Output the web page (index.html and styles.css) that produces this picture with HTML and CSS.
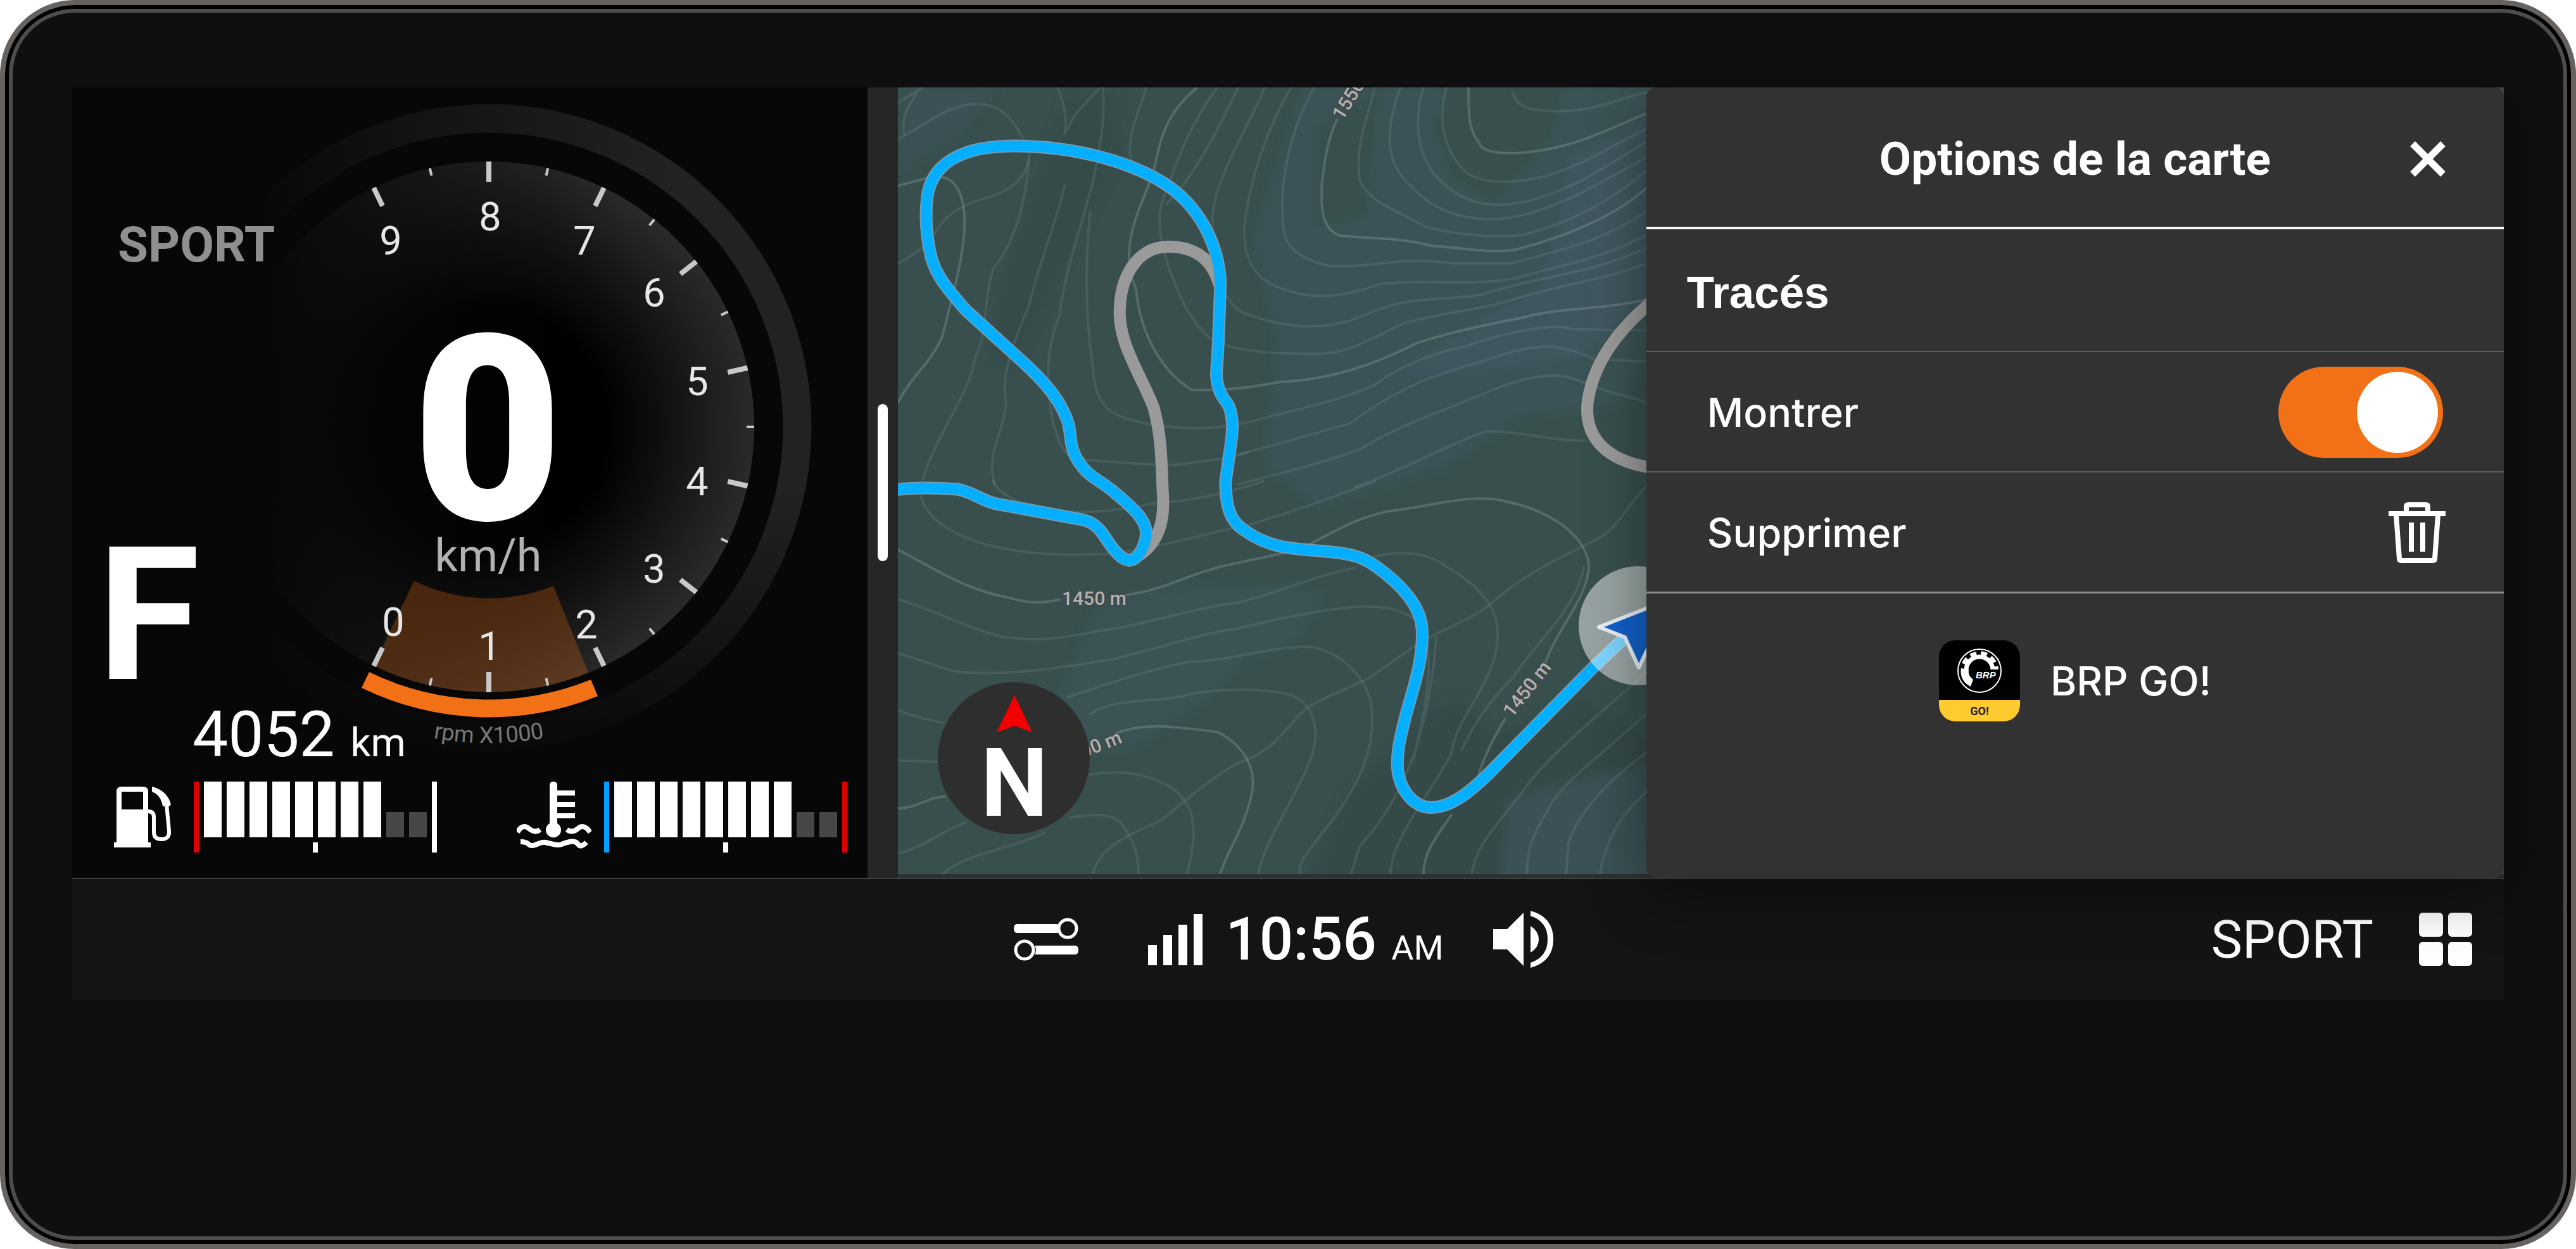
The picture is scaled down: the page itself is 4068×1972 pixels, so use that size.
FILE: index.html
```html
<!DOCTYPE html>
<html lang="fr">
<head>
<meta charset="utf-8">
<meta name="viewport" content="width=device-width, initial-scale=1">
<title>Options de la carte</title>
<link rel="stylesheet" href="styles.css">
</head>
<body>
<div class="device">
  <div class="screen">
    <main class="panes">
      <section class="cluster" aria-label="Instruments">
        <svg class="gauge" viewBox="114 138 1256 1062" role="img" aria-label="Compte-tours">
          <defs>
            <linearGradient id="ring" x1="0" x2="1" y1="0" y2="0">
              <stop offset="0.12" stop-color="#222" stop-opacity="0"/>
              <stop offset="0.5" stop-color="#1c1c1c" stop-opacity="0.75"/>
              <stop offset="0.8" stop-color="#222"/>
            </linearGradient>
            <linearGradient id="ringFade" x1="0" x2="0" y1="0" y2="1">
              <stop offset="0.6" stop-color="#070707" stop-opacity="0"/>
              <stop offset="1" stop-color="#070707" stop-opacity="0.85"/>
            </linearGradient>
            <radialGradient id="disc">
              <stop offset="0.45" stop-color="#000"/>
              <stop offset="1" stop-color="#2a2a2a"/>
            </radialGradient>
            <linearGradient id="discFade" x1="0" x2="1" y1="0" y2="0">
              <stop offset="0.08" stop-color="#070707"/>
              <stop offset="0.75" stop-color="#070707" stop-opacity="0"/>
            </linearGradient>
          </defs>
          <circle cx="772" cy="674" r="487" fill="none" stroke="url(#ring)" stroke-width="45"/>
          <circle cx="772" cy="674" r="487" fill="none" stroke="url(#ringFade)" stroke-width="48"/>
          <circle cx="772" cy="674" r="419" fill="url(#disc)"/>
          <circle cx="772" cy="674" r="420" fill="url(#discFade)"/>
          <path d="M654 917A270 270 0 0 0 874 925L929 1062A419 419 0 0 1 590 1051Z" fill="#f07018" opacity="0.27"/>
          <path d="M583 1061A429 429 0 0 0 933 1073L944 1099A458 458 0 0 1 571 1086Z" fill="#f27016"/>
          <g fill="#c8c8c8">
            <path id="major" d="M768 255h8v32h-8z"/>
            <use href="#major" transform="rotate(-25.714 772 674)"/>
            <use href="#major" transform="rotate(25.714 772 674)"/>
            <use href="#major" transform="rotate(51.429 772 674)"/>
            <use href="#major" transform="rotate(77.143 772 674)"/>
            <use href="#major" transform="rotate(102.857 772 674)"/>
            <use href="#major" transform="rotate(128.571 772 674)"/>
            <use href="#major" transform="rotate(154.286 772 674)"/>
            <use href="#major" transform="rotate(180 772 674)"/>
            <use href="#major" transform="rotate(205.714 772 674)"/>
            <path id="minor" d="M770 255h4v12h-4z" transform="rotate(-12.857 772 674)"/>
            <use href="#minor" transform="rotate(25.714 772 674)"/>
            <use href="#minor" transform="rotate(51.429 772 674)"/>
            <use href="#minor" transform="rotate(77.143 772 674)"/>
            <use href="#minor" transform="rotate(102.857 772 674)"/>
            <use href="#minor" transform="rotate(128.571 772 674)"/>
            <use href="#minor" transform="rotate(154.286 772 674)"/>
            <use href="#minor" transform="rotate(180 772 674)"/>
            <use href="#minor" transform="rotate(205.714 772 674)"/>
          </g>
          <g class="gauge-number">
            <text x="617" y="402">9</text>
            <text x="774" y="364">8</text>
            <text x="923" y="402">7</text>
            <text x="1033" y="484">6</text>
            <text x="1101" y="624">5</text>
            <text x="1101" y="782">4</text>
            <text x="1033" y="920">3</text>
            <text x="926" y="1008">2</text>
            <text x="773" y="1042">1</text>
            <text x="621" y="1004">0</text>
          </g>
          <text class="gauge-speed" x="770" y="820">0</text>
          <text class="gauge-unit" x="771" y="902">km/h</text>
          <path id="scaleArc" d="M273 674A499 499 0 0 0 1271 674" fill="none"/>
          <text class="gauge-scale"><textPath href="#scaleArc" startOffset="50%">rpm X1000</textPath></text>
        </svg>
        <div class="readouts">
          <p class="mode">SPORT</p>
          <p class="gear">F</p>
          <p class="odometer">4052 <span class="odometer-unit">km</span></p>
        </div>
        <div class="levels">
          <div class="level">
            <svg class="level-icon fuel" viewBox="0 0 92 96" width="92" height="96" role="img" aria-label="Carburant">
              <path fill="#fff" fill-rule="evenodd" d="M4 8q0-8 8-8h34q8 0 8 8v80h4v8H0v-8h4zM12 8v28h34V8z"/>
              <path fill="none" stroke="#fff" stroke-width="6" d="M54 39q9 0 9 9v24q0 11 12 11 13 0 12-13l-4-42"/>
              <path fill="#fff" d="M60 0q24 6 30 28l-4 4-9-1q-3-18-17-23z"/>
            </svg>
            <div class="bars" role="img" aria-label="Niveau 8 sur 10">
              <i class="limit red"></i>
              <i class="bar"></i><i class="bar"></i><i class="bar"></i><i class="bar"></i><i class="bar"></i><i class="bar"></i><i class="bar"></i><i class="bar"></i><i class="bar off"></i><i class="bar off"></i>
              <i class="limit white"></i>
            </div>
          </div>
          <div class="level">
            <svg class="level-icon" viewBox="0 0 118 106" width="118" height="106" role="img" aria-label="Température moteur">
              <path fill="#fff" d="M52 6q0-6 6-6t6 6v8h28v8H64v10h28v8H64v10h28v8H64v8a12 12 0 1 1-12 0z"/>
              <path fill="none" stroke="#fff" stroke-width="8" d="M1 80q8-14 18-6t18 2M79 76q9 6 18-2t19 6M6 95q9 0 13 4t13 0 13-3 13 3 13 0 13-4 13 4 13-3"/>
            </svg>
            <div class="bars" role="img" aria-label="Niveau 8 sur 10">
              <i class="limit blue"></i>
              <i class="bar"></i><i class="bar"></i><i class="bar"></i><i class="bar"></i><i class="bar"></i><i class="bar"></i><i class="bar"></i><i class="bar"></i><i class="bar off"></i><i class="bar off"></i>
              <i class="limit red"></i>
            </div>
          </div>
        </div>
      </section>

      <div class="splitter" role="separator" aria-orientation="vertical"><span class="splitter-handle"></span></div>

      <section class="map" aria-label="Carte">
        <svg class="map-canvas" viewBox="1418 138 2536 1242" preserveAspectRatio="xMinYMin slice" role="img" aria-label="Carte topographique">
          <defs>
            <filter id="soft" x="-10%" y="-10%" width="120%" height="120%"><feGaussianBlur stdDeviation="8"/></filter>
            <path id="route" class="route-shape" d="M72 1575C110 1566 150 1568 190 1574 225 1590 230 1610 260 1628L430 1690C465 1700 475 1750 490 1790 505 1830 515 1848 527 1848 545 1848 558 1790 560 1750 562 1690 530 1640 500 1590 480 1555 465 1543 445 1510 405 1430 415 1380 407 1320 390 1210 340 1120 300 1050L205 880C170 800 148 750 138 680 128 600 125 520 130 440 140 310 200 246 300 246 420 246 540 310 610 410 670 500 704 640 706 780L702 1000 698 1130C700 1200 712 1220 722 1250 735 1310 728 1380 722 1460L716 1543C716 1640 725 1700 755 1735 800 1800 850 1805 900 1812 960 1820 985 1835 1010 1870 1060 1940 1098 2020 1102 2110 1106 2230 1085 2340 1070 2450 1060 2530 1050 2600 1055 2670 1062 2750 1090 2805 1120 2805 1160 2805 1200 2740 1240 2660L1440 2260 1510 2130"/>
          </defs>
          <path fill="#384f4e" d="M1418 138h2536v1242H1418z"/>
          <g filter="url(#soft)">
            <path fill="#3b5356" d="M2060 138h560v400l-60 100-160 20-120 80-200 60-80-60 20-200-40-160z"/>
            <path fill="#384f4e" d="M2300 100h180l-30 120-90 100-70-40-30-80zM2080 200l100-60-20 200-80 20z"/>
            <path fill="#40565f" d="M2480 250l140-70v280l-120 100-130 20-150 10 60-50 90-50 60-30 30-90z"/>
            <path fill="#364b4a" d="M1680 160l80-20 10 100-60 120-50 100-60 120-40-20 30-140z"/>
            <path fill="#3b5255" d="M1730 960l100-30 180-10 80 20-40 70-80 30-60 60-120 80-130 10 20-110z"/>
            <path fill="#354a49" d="M2240 1140l60-40 60 60 140-60 120 80v220h-560l60-140z"/>
            <path fill="#3a5154" d="M1430 138h140l-60 80-92 50zM2380 1260l240-60v190h-250z"/>
          </g>
          <g class="map-lines" transform="translate(1360 130) scale(.8036 .4082)">
            <g class="contour">
              <path d="M72 220C130 160 180 70 240 85 290 100 310 180 330 270 330 360 300 420 240 450 170 490 150 560 140 600 120 650 90 680 72 700"/>
              <path d="M72 80L120 20M85 200C75 130 100 80 112 30M385 20C400 80 405 150 400 200M470 20C440 80 410 140 405 185"/>
              <path d="M475 20C480 140 470 240 458 360 440 520 400 720 390 900 360 1040 365 1180 375 1300 385 1380 395 1420 410 1450"/>
              <path d="M560 20C550 100 520 200 530 300M700 20C650 150 620 300 600 420 560 560 620 800 640 880 660 940 680 990 700 1010M740 20C700 200 640 400 600 470"/>
              <path d="M330 300C320 500 300 620 260 720 240 830 250 960 225 1060 210 1220 150 1350 120 1540"/>
              <path d="M400 400C380 560 350 700 330 860 310 960 270 1130 285 1240 280 1360 245 1420 262 1560"/>
              <path d="M450 500C440 700 440 900 455 1100 460 1280 500 1290 560 1320 640 1350 720 1340 790 1300 860 1260 930 1240 1010 1170 1060 1090 1140 1040 1190 1020 1280 960 1360 930 1400 955L1543 960"/>
              <path d="M793 20C760 180 690 380 690 540 690 660 700 840 750 890 840 960 920 960 990 900 1080 820 1130 850 1220 820 1330 750 1440 740 1543 640"/>
              <path d="M845 20C790 200 760 420 753 560 750 700 780 770 830 800 900 850 960 820 1020 780 1110 760 1180 790 1280 760 1390 700 1460 680 1543 590"/>
              <path d="M890 20C840 200 820 400 830 560 830 640 870 690 920 710 1000 720 1060 670 1160 700L1280 700C1390 640 1460 610 1543 500"/>
              <path d="M1010 20C990 160 970 260 980 380 1000 470 1060 500 1110 560 1200 600 1260 600 1300 590 1400 540 1480 450 1543 340"/>
              <path d="M1060 20C1030 180 1030 300 1070 380 1110 470 1150 520 1230 530 1340 530 1440 400 1543 290"/>
              <path d="M1105 20C1080 180 1100 330 1150 400 1190 470 1240 490 1310 460 1420 400 1480 300 1543 230"/>
              <path d="M1150 20C1130 160 1150 280 1190 350 1230 400 1290 390 1350 360 1430 310 1480 240 1543 180M1280 40C1290 110 1330 110 1370 112 1450 110 1490 60 1543 40"/>
              <path d="M720 1020C780 1050 850 1050 900 1050 960 1050 1000 990 1070 930 1140 890 1220 880 1280 840 1400 770 1470 760 1543 700"/>
              <path d="M740 1440C840 1390 900 1350 960 1320 1040 1200 1120 1130 1220 1080 1320 1010 1360 1000 1440 1070L1543 1080"/>
              <path d="M740 1555C830 1510 910 1470 980 1420 1060 1320 1160 1260 1240 1190 1320 1130 1370 1110 1430 1170 1480 1210 1510 1210 1543 1240M970 1565C1080 1490 1160 1390 1230 1350 1310 1350 1360 1390 1420 1385"/>
              <path d="M440 1460C500 1470 560 1480 620 1480 680 1460 720 1460 760 1430M790 1543C700 1600 640 1620 570 1630 480 1670 400 1670 330 1640 280 1600 265 1570 260 1543"/>
            </g>
            <g class="contour" transform="translate(0 1543)">
              <path d="M118 60C130 160 200 230 280 260 360 290 420 285 500 280 600 250 700 190 760 170 860 110 930 60 1010 0"/>
              <path d="M72 455C160 510 230 590 290 605 380 625 420 590 500 570 600 530 680 480 740 470 820 430 900 360 970 335"/>
              <path d="M72 665C120 690 170 740 210 740 320 750 420 710 490 690 600 640 680 580 740 570 840 520 930 490 980 485 1040 480 1070 510 1085 530"/>
              <path d="M405 835C460 800 560 730 640 700 740 690 800 640 880 640 950 660 1000 780 1003 880 1010 1040 980 1160 930 1300 880 1430 860 1460 862 1520"/>
              <path d="M450 900C500 830 600 860 650 820 720 800 800 800 850 830 900 880 900 1000 880 1090 850 1240 790 1400 780 1520"/>
              <path d="M450 1135C520 1110 580 1140 620 1200 660 1270 660 1370 640 1520M410 1300C450 1290 490 1280 510 1320 540 1400 545 1460 545 1520"/>
              <path d="M72 1440C130 1410 160 1350 205 1320M160 1520C200 1440 300 1420 360 1360M455 1520C470 1400 540 1360 590 1310 640 1230 700 1130 740 1090 820 1040 840 930 880 870 940 810 980 780 1000 760 1040 700 1080 650 1100 620 1160 560 1210 520 1240 470 1300 360 1380 290 1430 240 1490 190 1500 100 1543 20"/>
              <path d="M1010 290C1060 270 1110 270 1150 330 1200 390 1240 450 1250 560 1260 760 1170 900 1160 1050 1130 1180 1040 1380 1040 1520"/>
              <path d="M1420 330C1410 480 1320 640 1280 760 1230 860 1200 950 1180 1040"/>
              <path d="M1543 740C1450 900 1340 1080 1300 1200 1240 1350 1205 1420 1200 1520M1543 900C1440 1080 1370 1180 1350 1270 1310 1400 1310 1440 1308 1520M1543 1050C1450 1180 1400 1320 1390 1400L1385 1520M1543 1200C1480 1310 1460 1420 1452 1520M1100 540C1130 700 1110 860 1085 1080M1130 600C1120 900 1080 1200 980 1410L962 1520"/>
              <path d="M72 885C100 910 130 920 160 935M72 1080L150 1085"/>
            </g>
            <g class="contour index">
              <path d="M1543 120C1450 200 1400 245 1330 265 1260 285 1220 270 1215 235 1190 180 1195 100 1193 20"/>
              <path d="M1543 410C1480 520 1380 600 1290 645 1250 665 1180 640 1120 632 1060 600 1000 605 940 593 900 560 905 470 905 400 910 300 920 200 935 145"/>
              <path d="M1543 840C1460 880 1370 870 1300 910 1220 940 1150 970 1090 1010 1000 1100 920 1150 820 1160 740 1190 700 1190 650 1190 600 1130 550 1000 540 800 500 620 560 450 575 340 590 200 600 120 660 20"/>
              <path d="M72 400L130 370C190 340 205 450 203 560 200 700 175 850 160 980 140 1080 100 1130 72 1240"/>
              <path d="M72 1808C130 1863 200 1963 290 1993 340 2023 370 2008 390 2001M520 1983C600 1963 650 1893 730 1863 800 1833 860 1813 890 1778 950 1713 1000 1663 1060 1653 1130 1633 1200 1593 1260 1618 1350 1653 1420 1743 1430 1863 1430 1993 1370 2103 1345 2243M1265 2463C1240 2543 1215 2643 1210 2713M1160 2833C1120 2943 1105 2993 1105 3063"/>
              <path d="M72 2808C110 2808 130 2763 165 2763M500 2518C560 2473 620 2493 700 2513 760 2573 780 2673 765 2773 750 2893 720 2973 705 3063"/>
            </g>
            <g class="track">
              <path d="M703 780C690 690 660 636 603 636 540 636 508 760 508 890 508 1020 550 1130 575 1260 592 1380 590 1500 593 1600 596 1700 585 1800 527 1850"/>
              <path d="M1600 780C1490 930 1440 1080 1428 1230 1420 1350 1450 1470 1570 1495"/>
            </g>
            <use href="#route" class="route-edge"/>
            <use href="#route" class="route"/>
          </g>
          <g class="map-label">
            <text x="1677" y="955">1450 m</text>
            <text x="2388" y="1134" transform="rotate(-52 2388 1134)">1450 m</text>
            <text x="2120" y="191" transform="rotate(-58 2120 191)">1550 m</text>
            <text x="1679" y="1210" transform="rotate(-22 1679 1210)">1500 m</text>
          </g>
          <circle cx="2587" cy="988" r="94" fill="#fff" opacity="0.48"/>
          <path d="M2525 990L2640 945 2588 1054 2566 1006Z" fill="#1160c8" stroke="#e8eef4" stroke-width="6" stroke-linejoin="round"/>
          <circle cx="1601" cy="1197" r="120" fill="#2e2e2e"/>
          <path d="M1602 1098L1630 1156 1602 1146 1574 1156Z" fill="#f50000"/>
          <text class="compass" x="1602" y="1288">N</text>
        </svg>

        <aside class="options" aria-labelledby="options-title">
          <header class="options-head">
            <h1 class="options-title" id="options-title">Options de la carte</h1>
            <button class="icon-button close" type="button" aria-label="Fermer">
              <svg viewBox="0 0 56 56" width="56" height="56"><path d="M4 4l48 48M52 4L4 52" stroke="#fff" stroke-width="11"/></svg>
            </button>
          </header>
          <h2 class="options-section">Tracés</h2>
          <div class="option">
            <label for="show-tracks">Montrer</label>
            <input class="toggle" id="show-tracks" type="checkbox" role="switch" checked>
          </div>
          <div class="option last">
            <span id="delete-label">Supprimer</span>
            <button class="icon-button" type="button" aria-labelledby="delete-label">
              <svg viewBox="0 0 90 96" width="90" height="96" fill="none" stroke="#fff" stroke-width="8">
                <path d="M0 18h90M28 18V7q0-3 3-3h28q3 0 3 3v11M12 20l5 69q0 3 3 3h50q3 0 3-3l5-69M36 32v46M54 32v46"/>
              </svg>
            </button>
          </div>
          <a class="app" href="#brp-go">
            <svg viewBox="0 0 128 128" width="128" height="128" aria-hidden="true">
              <clipPath id="tile"><rect width="128" height="128" rx="26"/></clipPath>
              <g clip-path="url(#tile)">
                <path d="M0 0h128v128H0z"/>
                <path fill="#ffcb2e" d="M0 94h128v34H0z"/>
              </g>
              <circle cx="64" cy="48" r="34" fill="none" stroke="#fff" stroke-width="2"/>
              <path fill="none" stroke="#fff" stroke-width="7" d="M85 46A21 21 0 0 0 43 48"/>
              <path fill="none" stroke="#fff" stroke-width="6" stroke-dasharray="10 7" d="M39 37A27 27 0 0 1 91 46"/>
              <path fill="#fff" d="M35 44l5 1 7 1Q45 55 54 62L50 73Q32 64 35 44z"/>
              <text class="app-brand" x="58" y="60">BRP</text>
              <text class="app-go" x="64" y="118">GO!</text>
            </svg>
            <span>BRP GO!</span>
          </a>
        </aside>
      </section>
    </main>

    <footer class="statusbar">
      <div class="status-center">
        <button class="icon-button" type="button" aria-label="Réglages rapides">
          <svg class="sliders" viewBox="0 0 102 68" width="102" height="68">
            <path d="M5 10h64q4 7 0 14H5q-5 0-5-7t5-7zM97 44H33q4 7 0 14h64q5 0 5-7t-5-7z" fill="#fff"/>
            <circle cx="85" cy="17" r="14" fill="#141414" stroke="#fff" stroke-width="5"/>
            <circle cx="17" cy="51" r="14" fill="#141414" stroke="#fff" stroke-width="5"/>
          </svg>
        </button>
        <svg class="signal" viewBox="0 0 86 81" width="86" height="81" role="img" aria-label="Signal" fill="#fff">
          <path d="M0 49h14v32H0zM24 33h14v48H24zM48 17h14v64H48zM72 0h14v81H72z"/>
        </svg>
        <time class="clock" datetime="10:56">10:56 <span class="clock-period">AM</span></time>
        <button class="icon-button volume" type="button" aria-label="Volume">
          <svg viewBox="0 0 95 90" width="95" height="90" fill="#fff">
            <path d="M0 29h22L48 3v84L22 61H0zM59 24q13 8 13 21T59 66zM59 0q36 10 36 45T59 90v-8q27-9 27-37T59 8z"/>
          </svg>
        </button>
      </div>
      <div class="status-right">
        <span>SPORT</span>
        <button class="icon-button" type="button" aria-label="Applications">
          <svg viewBox="0 0 84 84" width="84" height="84" fill="#fff">
            <rect width="38" height="38" rx="6"/><rect x="46" width="38" height="38" rx="6"/>
            <rect y="46" width="38" height="38" rx="6"/><rect x="46" y="46" width="38" height="38" rx="6"/>
          </svg>
        </button>
      </div>
    </footer>
  </div>
</div>
</body>
</html>
```
FILE: styles.css
```css
*,
*::before,
*::after {
  box-sizing: border-box;
}

body {
  margin: 0;
  background: #fff;
  color: #fff;
  font-family: Roboto, "Liberation Sans", sans-serif;
}

h1,
h2,
p {
  margin: 0;
}

svg {
  display: block;
}

/* Device frame */
.device {
  min-height: 100vh;
  padding: 130px 106px;
  border: 8px solid #656260;
  border-radius: 118px;
  background: #0f0f0f;
  box-shadow: inset 0 0 0 6px #000, inset 0 0 0 12px #4d4d4d;
}

.screen {
  display: flex;
  flex-direction: column;
}

.panes {
  display: grid;
  grid-template-columns: minmax(0, 157fr) 48px minmax(0, 317fr);
  min-height: 1248px;
}

/* Instrument cluster */
.cluster {
  display: grid;
  grid-template-rows: auto 1fr;
  background: #070707;
}

.gauge,
.readouts {
  grid-area: 1 / 1;
}

.gauge {
  width: 100%;
  height: auto;
}

.gauge text {
  text-anchor: middle;
}

.gauge-number {
  fill: #e6e6e6;
  font-size: 63px;
}

.gauge-speed {
  fill: #fff;
  font-size: 410px;
  font-weight: 900;
}

.gauge-unit {
  fill: #b2b2b2;
  font-size: 72px;
}

.gauge-scale {
  fill: #777;
  font-size: 36px;
}

.readouts {
  display: flex;
  flex-direction: column;
  padding: 209px 56px 0 72px;
}

.mode {
  color: #8f8f8f;
  font-size: 78px;
  font-weight: 700;
  line-height: 80px;
}

.gear {
  margin-top: auto;
  padding-bottom: 28px;
  margin-left: -32px;
  font-size: 294px;
  font-weight: 700;
  line-height: 240px;
}

.odometer {
  padding-left: 118px;
  font-size: 100px;
  line-height: 80px;
}

.odometer-unit {
  font-size: 63px;
  line-height: 0;
}

.levels {
  display: flex;
  justify-content: space-between;
  padding: 34px 32px 0 66px;
}

.level {
  display: flex;
  gap: 20px;
}

.level:first-child {
  gap: 34px;
}

.fuel {
  margin-top: 8px;
}

.bars {
  display: flex;
  gap: 8px;
  height: 112px;
  background: linear-gradient(#fff, #fff) center bottom / 8px 16px no-repeat;
}

.limit {
  width: 8px;
  height: 112px;
}

.bar {
  width: 28px;
  height: 88px;
  background: #fff;
}

.bar.off {
  height: 40px;
  margin-top: 48px;
  background: #474747;
}

.limit.red {
  background: #dc0000;
}

.limit.blue {
  background: #00a0ff;
}

.limit.white {
  background: #fff;
}

/* Splitter */
.splitter {
  display: flex;
  justify-content: center;
  align-items: center;
  background: #262626;
}

.splitter-handle {
  width: 16px;
  height: 248px;
  border-radius: 8px;
  background: #fff;
}

/* Map */
.map {
  display: grid;
  position: relative;
  background: #2c3234;
}

.map-canvas,
.options {
  grid-area: 1 / 1;
}

.map-canvas {
  width: 100%;
  height: calc(100% - 6px);
}

.map-lines path,
.route-shape {
  fill: none;
  stroke-linecap: round;
  stroke-linejoin: round;
  vector-effect: non-scaling-stroke;
}

.contour path {
  stroke: #91a5a5;
  stroke-opacity: 0.17;
  stroke-width: 4px;
}

.contour.index path {
  stroke-opacity: 0.33;
}

.track path {
  stroke: #9a9a9a;
  stroke-width: 19px;
}

.route-edge {
  stroke: #6f9db4;
  stroke-width: 20px;
}

.route {
  stroke: #04afff;
  stroke-width: 16px;
}

.map-label {
  fill: #b4b0b0;
  stroke: #404848;
  stroke-width: 3px;
  paint-order: stroke;
  font-size: 30px;
  font-weight: 500;
}

.compass {
  fill: #fff;
  font-size: 150px;
  font-weight: 700;
  text-anchor: middle;
}

/* Map options panel */
.options {
  z-index: 1;
  justify-self: end;
  width: 53.4%;
  border-radius: 16px;
  background: #323232;
  box-shadow: 0 24px 96px rgba(0, 0, 0, 0.4);
  font-family: Inter, "Liberation Sans", sans-serif;
  font-size: 63px;
  font-weight: 500;
}

.options-head {
  display: grid;
  grid-template-columns: 1fr auto 1fr;
  align-items: center;
  height: 224px;
  padding: 6px 92px 0;
  border-bottom: 4px solid #f6f6f8;
}

.options-title {
  grid-column: 2;
  font-family: Roboto, "Liberation Sans", sans-serif;
  font-size: 73px;
  font-weight: 700;
}

.icon-button {
  padding: 0;
  border: 0;
  background: none;
  color: inherit;
  cursor: pointer;
}

.close {
  justify-self: end;
}

.options-section {
  padding: 8px 64px 0;
  border-bottom: 2px solid #5c5c5c;
  font-family: "Liberation Sans", sans-serif;
  font-size: 71px;
  font-weight: 700;
  line-height: 184px;
}

.option {
  display: flex;
  justify-content: space-between;
  align-items: center;
  height: 190px;
  padding: 2px 92px 0 96px;
  border-bottom: 2px solid #5c5c5c;
}

.option.last {
  height: 191px;
  border-bottom: 3px solid #8c8c8c;
}

.toggle {
  appearance: none;
  display: flex;
  width: 260px;
  height: 144px;
  margin: 0 4px;
  padding: 8px;
  border-radius: 72px;
  background: #6a6a6a;
}

.toggle::before {
  content: "";
  width: 128px;
  height: 128px;
  border-radius: 50%;
  background: #fff;
}

.toggle:checked {
  justify-content: flex-end;
  background: #f27016;
}

.app {
  display: flex;
  justify-content: center;
  align-items: center;
  gap: 48px;
  padding: 74px 64px 0;
  color: inherit;
  font-size: 63px;
  text-decoration: none;
}

.app-brand {
  fill: #fff;
  font-family: "Liberation Sans", sans-serif;
  font-size: 15px;
  font-style: italic;
  font-weight: 700;
}

.app-go {
  fill: #222;
  font-family: Roboto, sans-serif;
  font-size: 18px;
  font-weight: 700;
  text-anchor: middle;
}

/* Status bar */
.statusbar {
  display: grid;
  grid-template-columns: 1fr auto 1fr;
  align-items: center;
  min-height: 192px;
  padding: 0 50px;
  border-top: 2px solid #404040;
  background: #141414;
}

.status-center {
  grid-column: 2;
  display: flex;
  align-items: center;
  padding-right: 14px;
}

.signal {
  margin: 0 36px 0 110px;
}

.clock {
  font-size: 94px;
  font-weight: 500;
  line-height: 96px;
}

.clock-period {
  font-size: 54px;
  font-weight: 400;
  line-height: 0;
}

.volume {
  margin-left: 78px;
}

.status-right {
  display: flex;
  justify-content: flex-end;
  align-items: center;
  gap: 72px;
  font-size: 83px;
}
```
